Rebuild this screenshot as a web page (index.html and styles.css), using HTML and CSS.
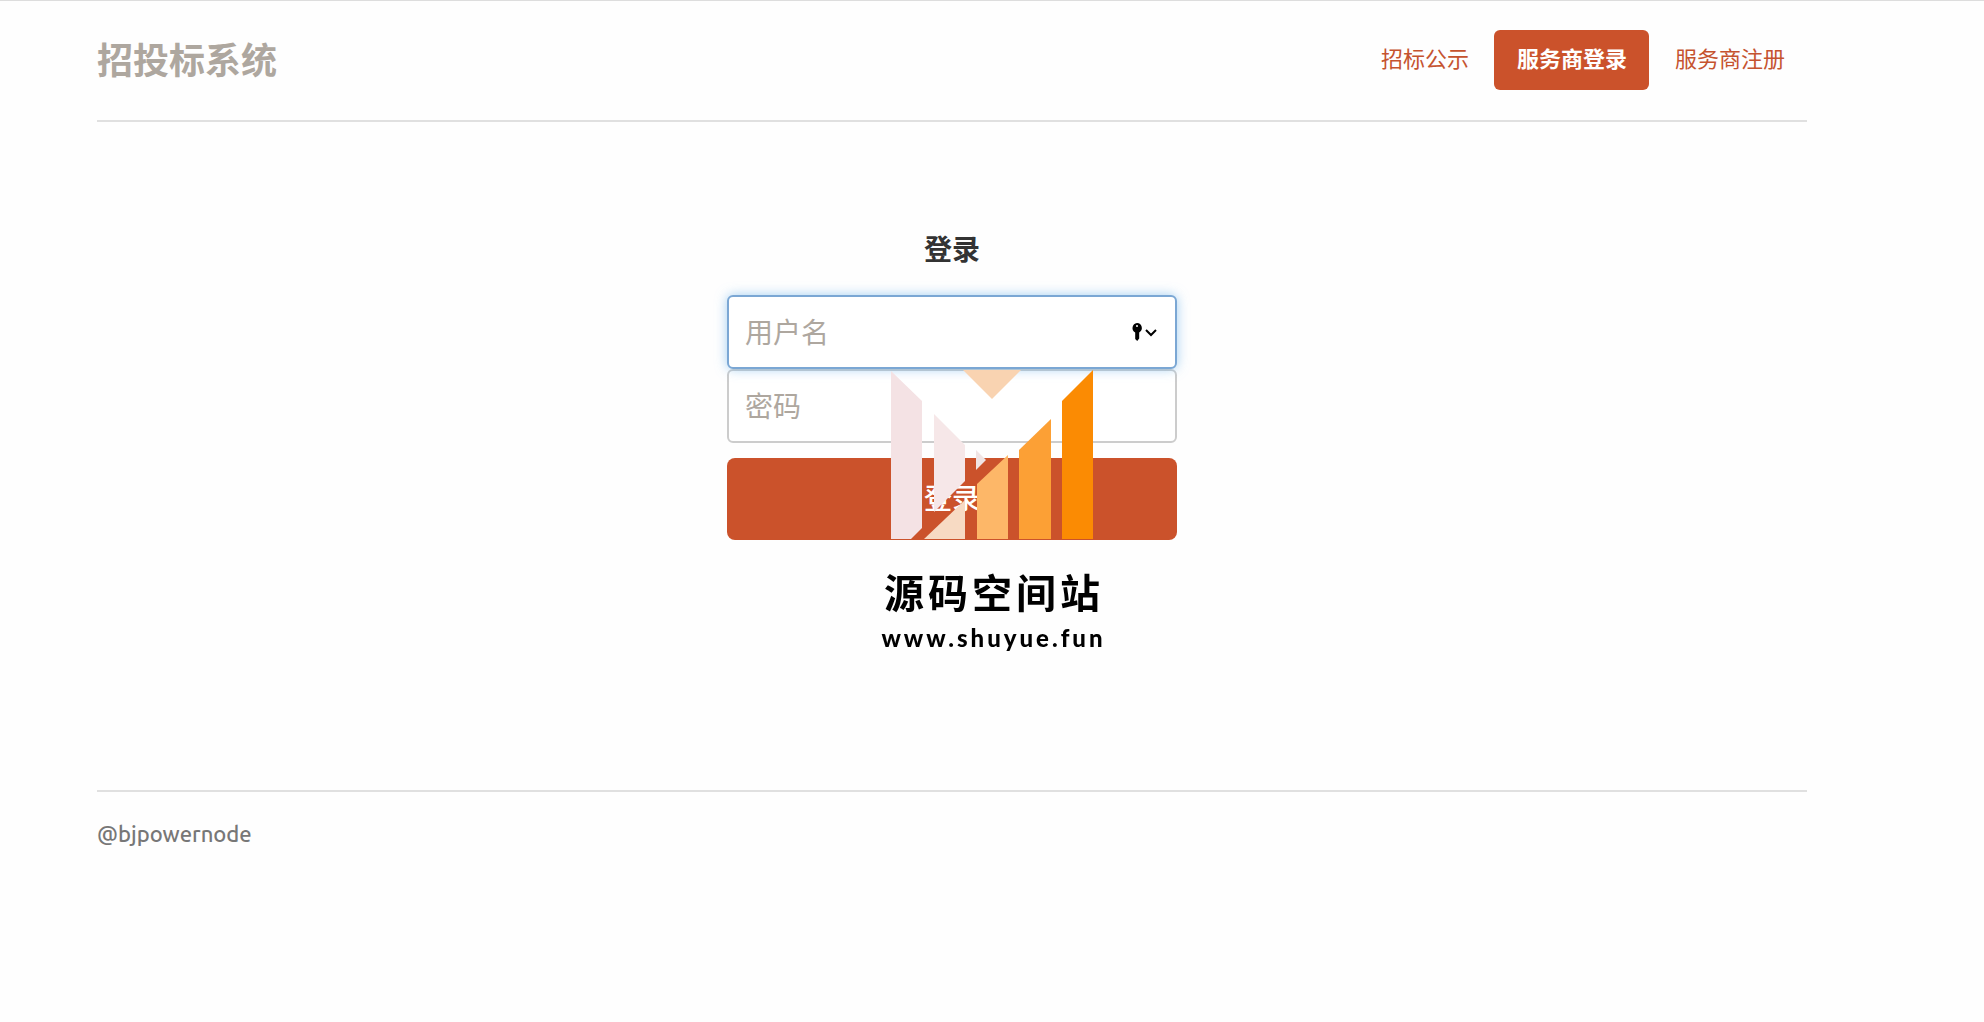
FILE: index.html
```html
<!DOCTYPE html>
<html lang="zh-CN">
<head>
  <meta charset="UTF-8">
  <meta name="viewport" content="width=device-width, initial-scale=1">
  <title>招投标系统</title>
  <link rel="stylesheet" href="styles.css">
</head>
<body>

<div class="container">
  <header class="header">
    <h3 class="brand">招投标系统</h3>
    <nav>
      <ul class="nav-pills">
        <li><a href="#">招标公示</a></li>
        <li class="active"><a href="#">服务商登录</a></li>
        <li><a href="#">服务商注册</a></li>
      </ul>
    </nav>
  </header>

  <main>
    <form class="form-signin">
      <h4 class="form-title">登录</h4>
      <div class="field">
        <input type="text" id="username" class="form-control focused" placeholder="用户名" aria-label="用户名">
        <svg class="key-icon" viewBox="0 0 26 20" aria-hidden="true">
          <path d="M6 1a5 5 0 0 1 2.2 9.4V16.500L6.200 19 4.200 17V10.400A5 5 0 0 1 6 1z"/>
          <circle cx="6" cy="4" r="1" fill="#fff"/>
          <path d="M15 8l5 5 5-5" fill="none" stroke="#000" stroke-width="2"/>
        </svg>
      </div>
      <div class="field">
        <input type="password" id="password" class="form-control" placeholder="密码" aria-label="密码">
      </div>
      <button type="submit" class="btn-primary">登录</button>
    </form>
  </main>

  <footer class="footer">
    <p>@bjpowernode</p>
  </footer>
</div>

<!-- 水印 -->
<div class="watermark">
  <svg class="watermark-logo" viewBox="0 0 204 169" aria-hidden="true">
    <path fill="#f4e2e4" d="M1 1l31 30v127l-11 11H1z"/>
    <path fill="#f6e7e8" d="M44 44l31 31v36l-31 31z"/>
    <path fill="#f0e4e4" d="M86 80l10 10-10 10z"/>
    <path fill="#f9d3b1" d="M73 0h58l-29 29z"/>
    <path fill="#f7dac3" d="M34 169l41-39v39z"/>
    <path fill="#fdb768" d="M87 114l31-29v84H87z"/>
    <path fill="#fca035" d="M129 80l32-31v120h-32z"/>
    <path fill="#fb8b03" d="M172 31l31-31v169h-31z"/>
  </svg>
  <div class="watermark-name">源码空间站</div>
  <div class="watermark-url">www.shuyue.fun</div>
</div>

</body>
</html>
```
FILE: styles.css
```css
* {
  box-sizing: border-box;
}

body {
  margin: 0;
  border-top: 1px solid #ddd;
  background: #fefefe;
  color: #333;
  font-family: Ubuntu, "Noto Sans", "Noto Sans CJK SC", sans-serif;
  font-size: 22px;
  line-height: 32px;
}

h3, h4, p, ul {
  margin: 0;
  padding: 0;
}

.container {
  margin: 0 177px 0 97px;
}

/* 头部 */
.header {
  display: flex;
  justify-content: space-between;
  align-items: center;
  padding: 29px 0 30px;
  border-bottom: 2px solid #e0e0e0;
}

.brand {
  padding-top: 2px;
  color: #aea79f;
  font-size: 36px;
  font-weight: 700;
  line-height: 58px;
}

.nav-pills {
  display: flex;
  gap: 3px;
  list-style: none;
}

.nav-pills a {
  display: block;
  padding: 13px 22px 15px 23px;
  border-radius: 6px;
  color: #c5532f;
  text-decoration: none;
}

.nav-pills .active a {
  background: #cb522b;
  color: #fff;
  font-weight: 700;
}

/* 登录表单 */
.form-signin {
  max-width: 450px;
  margin: 0 auto;
  padding: 108px 0 250px;
}

.form-title {
  margin-bottom: 25px;
  font-size: 28px;
  font-weight: 700;
  line-height: 40px;
  text-align: center;
}

.field {
  position: relative;
}

.form-control {
  display: block;
  width: 100%;
  height: 74px;
  padding: 0 16px;
  border: 2px solid #ccc;
  border-radius: 6px;
  background: #fff;
  color: #333;
  font: inherit;
  font-size: 28px;
}

.form-control::placeholder {
  color: #aea79f;
  opacity: 1;
}

.form-control.focused {
  position: relative;
  z-index: 1;
  border-color: #7ba7d4;
  box-shadow: 0 0 12px rgba(102, 175, 233, 0.6);
}

.key-icon {
  position: absolute;
  z-index: 2;
  top: 27px;
  right: 20px;
  width: 26px;
  height: 20px;
}

.btn-primary {
  display: block;
  width: 100%;
  height: 82px;
  margin-top: 15px;
  border: 0;
  border-radius: 8px;
  background: #cb522b;
  color: #fff;
  font: inherit;
  font-size: 28px;
  font-weight: 500;
}

/* 底部 */
.footer {
  padding-top: 26px;
  border-top: 2px solid #e0e0e0;
  color: #777;
  font-weight: 500;
}

/* 水印 */
.watermark {
  position: fixed;
  inset: 0;
  z-index: 10;
  display: flex;
  flex-direction: column;
  align-items: center;
  justify-content: center;
  color: #000;
  pointer-events: none;
}

.watermark-logo {
  width: 204px;
  height: 169px;
}

.watermark-name {
  margin-top: 26px;
  padding-left: 4px;
  font-size: 40px;
  font-weight: 700;
  letter-spacing: 4px;
  line-height: 58px;
}

.watermark-url {
  padding-left: 3px;
  font-family: Lato, sans-serif;
  font-size: 24px;
  font-weight: 900;
  letter-spacing: 3px;
  line-height: 30px;
}
```
